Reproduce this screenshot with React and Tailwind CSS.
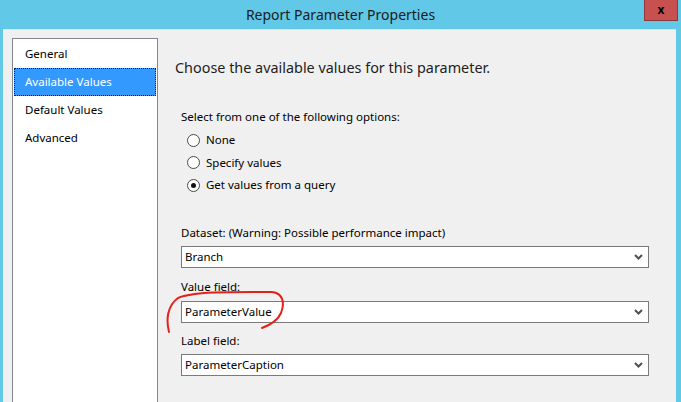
import React from "react";

const items = ["General", "Available Values", "Default Values", "Advanced"];

function Chevron() {
    return (
        <svg width="9" height="6" viewBox="0 0 9 6" className="mr-[5px]">
            <polyline points="1,1 4.5,4.5 8,1" fill="none" stroke="#505050" strokeWidth="2" />
        </svg>
    );
}

function Combo({ value }) {
    return (
        <div className="w-[468px] h-[22px] bg-white border border-[#7a7a7a] flex items-center justify-between pl-[3px] text-[11.5px] text-black">
            <span>{value}</span>
            <Chevron />
        </div>
    );
}

function Radio({ label, checked }) {
    return (
        <div className="h-[22.5px] flex items-center">
            <span className="w-[13px] h-[13px] rounded-full border border-[#4a4a4a] bg-white flex items-center justify-center">
                {checked && <span className="w-[5px] h-[5px] rounded-full bg-[#111]" />}
            </span>
            <span className="ml-[6px]">{label}</span>
        </div>
    );
}

export default function App() {
    return (
        <div className="relative w-[681px] h-[402px] overflow-hidden bg-[#62c8e8] flex flex-col font-['Noto_Sans','Open_Sans',sans-serif]">
            <div className="h-[29px] shrink-0 flex items-center justify-center text-[14px] text-[#1b1b1b]">
                Report Parameter Properties
            </div>
            <div className="absolute top-0 right-[3px] w-[34px] h-[21px] bg-[#c75050] border border-[#8d3a3a] border-t-0 flex items-center justify-center text-[12px] font-bold text-black leading-none">
                x
            </div>

            <div className="flex-1 ml-[3px] mr-[5px] bg-[#f0f0f0] border-t border-[#e2e2e2] flex">
                {/* left nav list */}
                <div className="ml-[9px] mt-[8px] w-[146px] h-[400px] shrink-0 bg-white border border-[#828790] pt-px px-px text-[11.5px]">
                    {items.map((it) =>
                        it === "Available Values" ? (
                            <div key={it} className="h-[28px] flex items-center pl-[10px] bg-[#3399ff] text-white border border-dotted border-[#1a1a1a]">
                                {it}
                            </div>
                        ) : (
                            <div key={it} className="h-[28px] flex items-center pl-[11px] text-black">
                                {it}
                            </div>
                        )
                    )}
                </div>

                {/* right panel */}
                <div className="flex-1 pl-[17px] pt-[28px]">
                    <div className="text-[14.4px] leading-[20px] text-[#1e1e1e]">
                        Choose the available values for this parameter.
                    </div>
                    <div className="pl-[6px] text-[11.5px] leading-[16px] text-black">
                        <div className="mt-[31px]">Select from one of the following options:</div>
                        <div className="mt-[4px] pl-[6px]">
                            <Radio label="None" />
                            <Radio label="Specify values" />
                            <Radio label="Get values from a query" checked />
                        </div>

                        <div className="mt-[28px]">Dataset: (Warning: Possible performance impact)</div>
                        <div className="mt-[5px]"><Combo value="Branch" /></div>

                        <div className="mt-[11px]">Value field:</div>
                        <div className="mt-[6px]"><Combo value="ParameterValue" /></div>

                        <div className="mt-[10px]">Label field:</div>
                        <div className="mt-[5px]"><Combo value="ParameterCaption" /></div>
                    </div>
                </div>
            </div>

            {/* hand-drawn red annotation */}
            <svg className="absolute inset-0 pointer-events-none" width="681" height="402">
                <path
                    d="M169 332 C166 320 167 306 178 298 C195 291 240 292 272 292 C283 293 285 303 281 313 C278 320 270 325 262 328"
                    fill="none"
                    stroke="#e3201b"
                    strokeWidth="2"
                    strokeLinecap="round"
                />
            </svg>
        </div>
    );
}
